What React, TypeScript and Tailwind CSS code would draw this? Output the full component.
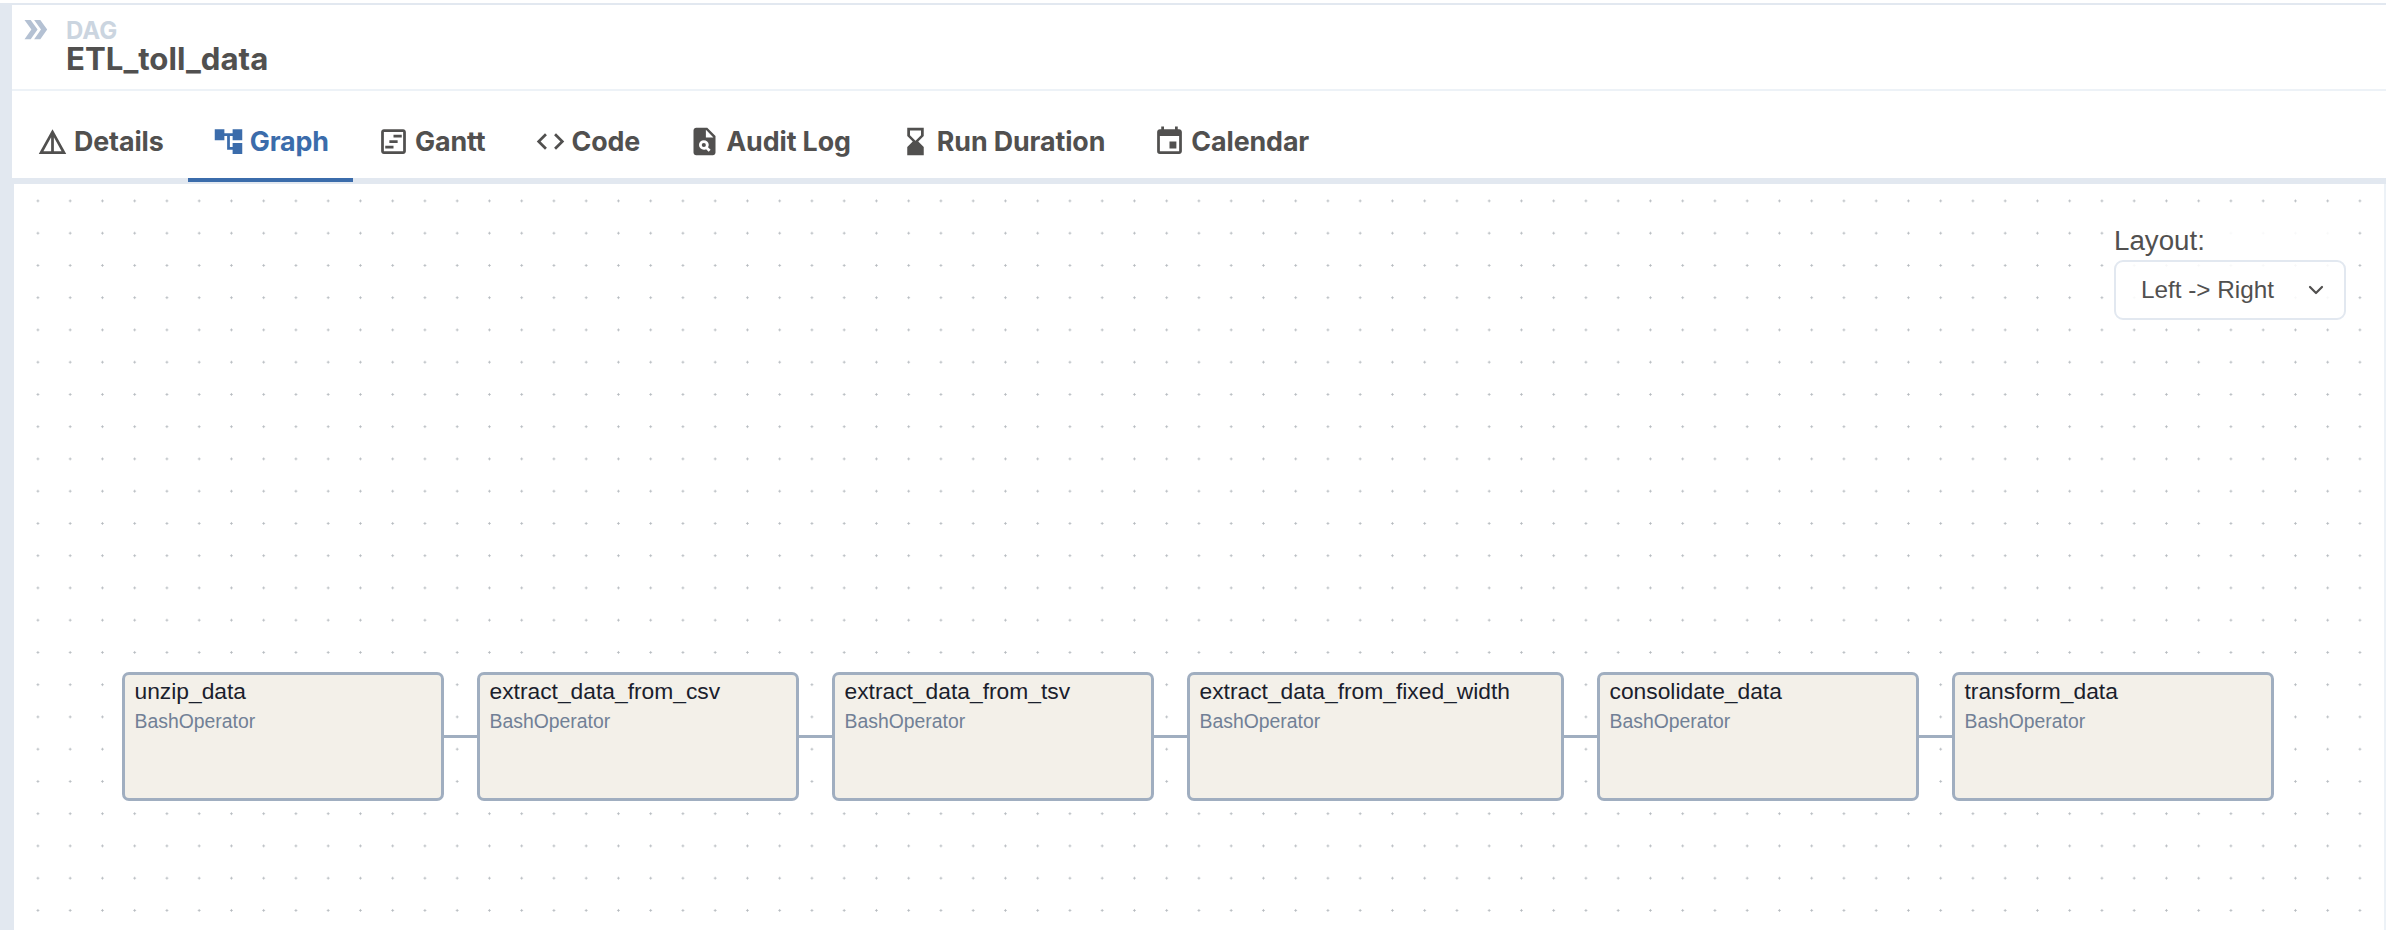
import React from "react";
import {
  MdDetails,
  MdAccountTree,
  MdOutlineViewTimeline,
  MdCode,
  MdPlagiarism,
  MdHourglassBottom,
  MdEvent,
  MdDoubleArrow,
} from "react-icons/md";

const tabs = [
  { label: "Details", icon: MdDetails },
  { label: "Graph", icon: MdAccountTree, active: true },
  { label: "Gantt", icon: MdOutlineViewTimeline },
  { label: "Code", icon: MdCode },
  { label: "Audit Log", icon: MdPlagiarism },
  { label: "Run Duration", icon: MdHourglassBottom },
  { label: "Calendar", icon: MdEvent },
];

const nodes = [
  { name: "unzip_data", w: "w-[322px]" },
  { name: "extract_data_from_csv", w: "w-[322px]" },
  { name: "extract_data_from_tsv", w: "w-[322px]" },
  { name: "extract_data_from_fixed_width", w: "w-[377px]" },
  { name: "consolidate_data", w: "w-[322px]" },
  { name: "transform_data", w: "w-[322px]" },
];

export default function App() {
  return (
    <div className="h-[930px] w-full overflow-hidden bg-white flex flex-col font-['Liberation_Sans',sans-serif]">
      <div className="h-[3px] shrink-0 bg-white" />
      <div className="h-[2px] shrink-0 bg-[#e2e8f0]" />
      <div className="flex-1 min-h-0 flex flex-col pl-[12px] bg-[#e2e8f0]">
        <header className="h-[86px] shrink-0 bg-white border-b-2 border-[#edf2f7] flex items-start font-['Inter',sans-serif]">
          <MdDoubleArrow className="ml-[7px] mt-[8px] text-[#b4c1d3]" size={33} />
          <div className="ml-[14px] mt-[13px]">
            <div className="text-[24px] leading-[25px] font-bold text-[#cbd5e0]">DAG</div>
            <div className="text-[31.2px] leading-[33px] font-bold text-[#51504f]">ETL_toll_data</div>
          </div>
        </header>
        <nav className="h-[93px] shrink-0 bg-white flex items-stretch border-b-[6px] border-[#e2e8f0] font-['Inter',sans-serif]">
          {tabs.map((t) => {
            const Icon = t.icon;
            return (
              <div
                key={t.label}
                className={
                  t.active
                    ? "flex items-center gap-[5px] px-[24px] h-[91px] border-b-4 border-[#3b6cab] text-[#3b6cab] pt-[13px]"
                    : "flex items-center gap-[5px] px-[24px] h-[91px] border-b-4 border-transparent text-[#51504f] pt-[13px]"
                }
              >
                <Icon size={33} />
                <span className="text-[26.8px] font-bold tracking-[-0.1px]">{t.label}</span>
              </div>
            );
          })}
        </nav>
        <main className="relative flex-1 min-h-0 ml-[2px] border-r-2 border-[#edf2f7] bg-white bg-[radial-gradient(circle,#b4b9be_0.9px,transparent_1.3px)] bg-[length:32.25px_32.25px] bg-[position:7.8px_0.8px]">
          <div className="flex items-center pl-[108px] pt-[488px]">
            {nodes.map((n, i) => (
              <React.Fragment key={n.name}>
                {i > 0 && <div className="w-[33px] h-[3px] shrink-0 bg-[#a0aec0]" />}
                <div className={`${n.w} h-[129px] shrink-0 rounded-[7px] border-[3px] border-[#a0aec0] bg-[#f3f0e9] pl-[9.5px] pt-[1px]`}>
                  <div className="text-[22.8px] leading-[30px] text-[#1a202c]">{n.name}</div>
                  <div className="text-[19.4px] leading-[30px] text-[#718096]">BashOperator</div>
                </div>
              </React.Fragment>
            ))}
          </div>
          <div className="absolute left-[2100px] top-[37px] w-[232px] bg-white/90">
            <div className="text-[27.7px] leading-[39px] text-[#51504f]">Layout:</div>
            <div className="h-[60px] rounded-[9px] border-2 border-[#e2e8f0] flex items-center justify-between pl-[25px] pr-[20px]">
              <span className="text-[24.3px] text-[#51504f]">Left -&gt; Right</span>
              <svg width="16" height="10" viewBox="0 0 16 10" fill="none" stroke="#51504f" strokeWidth="2.2" strokeLinecap="round" strokeLinejoin="round">
                <path d="M2 2l6 6 6-6" />
              </svg>
            </div>
          </div>
        </main>
      </div>
    </div>
  );
}
